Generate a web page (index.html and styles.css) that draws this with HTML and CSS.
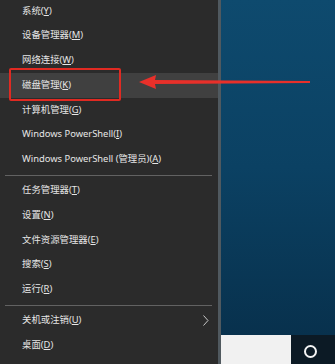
FILE: index.html
```html
<!DOCTYPE html>
<html>
<head>
<meta charset="utf-8">
<link rel="stylesheet" href="styles.css">
</head>
<body>
<div class="screen">
  <div class="menu">
    <div class="group first">
      <div class="item">系统(<u>Y</u>)</div>
      <div class="item">设备管理器(<u>M</u>)</div>
      <div class="item">网络连接(<u>W</u>)</div>
      <div class="item active">磁盘管理(<u>K</u>)</div>
      <div class="item">计算机管理(<u>G</u>)</div>
      <div class="item">Windows PowerShell(<u>I</u>)</div>
      <div class="item">Windows PowerShell (管理员)(<u>A</u>)</div>
    </div>
    <div class="sep"></div>
    <div class="group">
      <div class="item">任务管理器(<u>T</u>)</div>
      <div class="item">设置(<u>N</u>)</div>
      <div class="item">文件资源管理器(<u>E</u>)</div>
      <div class="item">搜索(<u>S</u>)</div>
      <div class="item">运行(<u>R</u>)</div>
    </div>
    <div class="sep"></div>
    <div class="group">
      <div class="item sub">关机或注销(<u>U</u>)
        <svg class="chev" width="6" height="11" viewBox="0 0 6 11"><path d="M0.5 0.5 L5 5.5 L0.5 10.5" fill="none" stroke="#c8c8c8" stroke-width="1"/></svg>
      </div>
      <div class="item">桌面(<u>D</u>)</div>
    </div>
  </div>
  <div class="edge"></div>
  <div class="desktop">
    <div class="wall"></div>
    <div class="taskbar">
      <div class="search"></div>
      <div class="cortana"></div>
    </div>
  </div>
  <div class="redbox"></div>
  <svg class="arrow" width="175" height="18" viewBox="0 0 175 18">
    <path d="M0 8 L17 1 L16 6 L171 7 L171 9 L16 10 L17 15 Z" fill="#e8302a"/>
  </svg>
</div>
</body>
</html>
```
FILE: styles.css
```css
html, body {
  margin: 0;
  padding: 0;
  background: #2b2b2b;
}
.screen {
  position: relative;
  width: 335px;
  height: 364px;
  display: flex;
  overflow: hidden;
  font-family: "Noto Sans", "Noto Sans CJK SC", sans-serif;
  font-size: 9.4px;
  color: #e6e6e6;
}
.menu {
  width: 218px;
  background: #2b2b2b;
  display: flex;
  flex-direction: column;
}
.group.first {
  margin-top: -1.5px;
}
.item {
  height: 24.8px;
  line-height: 24.8px;
  padding-left: 22px;
  white-space: nowrap;
  position: relative;
}
.item u {
  text-decoration: underline;
  text-underline-offset: 1px;
}
.item.active {
  background: #404040;
}
.sub {
  display: flex;
  align-items: center;
}
.chev {
  position: absolute;
  right: 9px;
  top: 7px;
}
.sep {
  height: 6px;
  display: flex;
  align-items: center;
  padding: 0 6px 0 5px;
}
.sep::before {
  content: "";
  flex: 1;
  height: 1px;
  background: #626262;
}
.edge {
  width: 3px;
  background: #50595f;
}
.desktop {
  flex: 1;
  display: flex;
  flex-direction: column;
}
.wall {
  flex: 1;
  background: linear-gradient(180deg, #0e4a6e 0%, #0b4163 50%, #08314d 100%);
}
.taskbar {
  height: 29px;
  display: flex;
  align-items: center;
  background: #0c1a25;
}
.search {
  width: 70px;
  height: 100%;
  background: #f1f1f1;
}
.cortana {
  width: 9px;
  height: 9px;
  border: 2px solid #f4f4f4;
  border-radius: 50%;
  margin-left: 13px;
  margin-top: 4px;
}
.redbox {
  position: absolute;
  left: 9px;
  top: 68px;
  width: 108px;
  height: 29px;
  border: 2px solid #e02a22;
  border-radius: 2px;
}
.arrow {
  position: absolute;
  left: 139px;
  top: 74px;
}
```
